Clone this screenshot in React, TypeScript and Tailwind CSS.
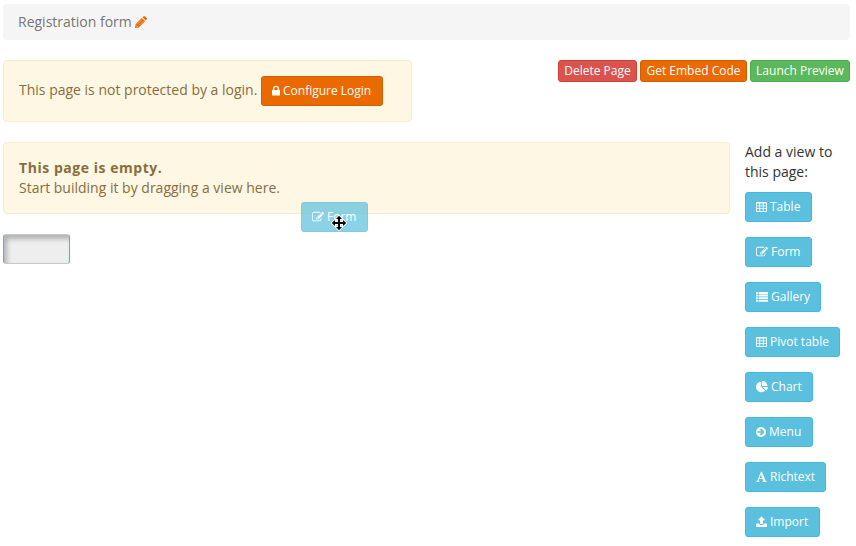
import type { ReactNode } from "react";

const font = "font-['Open_Sans','Noto_Sans',sans-serif]";

type GlyphProps = { w: number; vb?: string; children: ReactNode; className?: string };
const Glyph = ({ w, vb = "0 0 1792 1792", children, className = "" }: GlyphProps) => (
  <svg viewBox={vb} width={w} height={12} fill="currentColor" className={"shrink-0 " + className}>
    {children}
  </svg>
);

const Lock = () => (
  <Glyph w={8} vb="320 128 1152 1536">
    <path d="M640 768h512v-192q0-106-75-181t-181-75-181 75-75 181v192zm832 96v576q0 40-28 68t-68 28h-960q-40 0-68-28t-28-68v-576q0-40 28-68t68-28h32v-192q0-184 132-316t316-132 316 132 132 316v192h32q40 0 68 28t28 68z" />
  </Glyph>
);
const Table = () => (
  <Glyph w={11} vb="0 0 11 12">
    <path fillRule="evenodd" d="M1 1h9q1 0 1 1v8q0 1-1 1h-9q-1 0-1-1v-8q0-1 1-1zM.9 2.500v1.900h2.400v-1.900zM4.200 2.500v1.900h2.600v-1.900zM7.700 2.500v1.900h2.400v-1.900zM.9 5.300v1.900h2.400v-1.900zM4.200 5.300v1.900h2.600v-1.900zM7.700 5.300v1.900h2.400v-1.900zM.9 8.100v2h2.400v-2zM4.200 8.100v2h2.600v-2zM7.700 8.100v2h2.400v-2z" />
  </Glyph>
);
const Edit = () => (
  <Glyph w={12}>
    <path d="M888 1184l116-116-152-152-116 116v56h96v96h56zm440-720q-16-16-33 1l-350 350q-17 17-1 33t33-1l350-350q17-17 1-33zm80 594v190q0 119-84.5 203.5t-203.5 84.5h-832q-119 0-203.5-84.5t-84.5-203.5v-832q0-119 84.5-203.5t203.5-84.5h832q63 0 117 25 15 7 18 23 3 17-9 29l-49 49q-14 14-32 8-23-6-45-6h-832q-66 0-113 47t-47 113v832q0 66 47 113t113 47h832q66 0 113-47t47-113v-126q0-13 9-22l64-64q15-15 35-7t20 29zm-96-738l288 288-672 672h-288v-288zm444 132l-92 92-288-288 92-92q28-28 68-28t68 28l152 152q28 28 28 68t-28 68z" />
  </Glyph>
);
const List = () => (
  <Glyph w={12} vb="0 0 12 12">
    <path d="M0 1h1.800v1.900H0zM2.600 1H12v1.900H2.600zM0 3.600h1.800v1.900H0zM2.600 3.600H12v1.900H2.600zM0 6.200h1.800v1.900H0zM2.600 6.200H12v1.900H2.600zM0 8.800h1.800v1.900H0zM2.600 8.800H12v1.900H2.600z" />
  </Glyph>
);
const Pie = () => (
  <Glyph w={12} vb="0 60 1750 1680">
    <path d="M768 890l546 546q-106 108-247.5 168t-298.5 60q-209 0-385.5-103t-279.5-279.5-103-385.5 103-385.5 279.5-279.5 385.5-103v762zm187 6h773q0 157-60 298.5t-168 247.5zm709-128h-768v-768q209 0 385.5 103t279.5 279.5 103 385.5z" />
  </Glyph>
);
const Arrow = () => (
  <Glyph w={10} vb="128 0 1536 1792">
    <path d="M1413 896q0-27-18-45l-91-91-362-362q-18-18-45-18t-45 18l-91 91q-18 18-18 45t18 45l189 189h-502q-26 0-45 19t-19 45v128q0 26 19 45t45 19h502l-189 189q-18 18-18 45t18 45l91 91q18 18 45 18t45-18l362-362 91-91q18-18 18-45zm251 0q0 209-103 385.5t-279.5 279.5-385.5 103-385.5-103-279.5-279.5-103-385.5 103-385.5 279.5-279.5 385.5-103 385.5 103 279.5 279.5 103 385.5z" />
  </Glyph>
);
const Serif = () => (
  <Glyph w={11} vb="0 0 11 12">
    <path fillRule="evenodd" d="M5 .8h1l3.500 8.700q.3.800 1.400.9v.7H6.300v-.7q1.200 0 .9-.8L6.700 8H3.200l-.5 1.400q-.3.900.9 1v.7H.1v-.7q1-.1 1.400-1.100zM3.500 7.200h2.800L4.900 3.600z" />
  </Glyph>
);
const Upload = () => (
  <Glyph w={11} vb="0 0 11 12">
    <path d="M5.500.3L9.300 4.300H7V8H4V4.300H1.700zM.6 7.600h2.700v.4q0 .9.900.9h2.600q.9 0 .9-.9v-.4h2.700q.6 0 .6.6v2.300q0 .6-.6.6H.6q-.6 0-.6-.6V8.200q0-.6.6-.6z" />
  </Glyph>
);
const Pencil = () => (
  <svg viewBox="0 0 12 12" width="12" height="12" className="text-[#eb6a00]">
    <path fill="currentColor" d="M0 12L.6 8.200 6.800 2 10 5.200 3.800 11.400zM7.500 1.300L8.400.4q.8-.8 1.600 0l1.600 1.600q.8.8 0 1.600l-.9.9z" />
    <path d="M2.700 7.900L6.900 3.700M4.200 9.400L8.400 5.200" stroke="#fff" strokeWidth=".35" />
    <path d="M1 9.400L2.600 11" stroke="#fff" strokeWidth=".6" />
  </svg>
);

const views: { label: string; icon: ReactNode; width: string }[] = [
  { label: "Table", icon: <Table />, width: "w-[67px]" },
  { label: "Form", icon: <Edit />, width: "w-[67px]" },
  { label: "Gallery", icon: <List />, width: "w-[76px]" },
  { label: "Pivot table", icon: <Table />, width: "w-[95px]" },
  { label: "Chart", icon: <Pie />, width: "w-[68px]" },
  { label: "Menu", icon: <Arrow />, width: "w-[68px]" },
  { label: "Richtext", icon: <Serif />, width: "w-[81px]" },
  { label: "Import", icon: <Upload />, width: "w-[75px]" },
];

const ViewButton = ({ label, icon, width }: (typeof views)[number]) => (
  <button className={"flex h-[30px] items-center gap-[3px] whitespace-nowrap rounded-[3px] border border-[#46b8da] bg-[#5bc0de] pl-2.5 text-xs font-medium text-white " + width}>
    {icon}
    <span className="-mt-px">{label}</span>
  </button>
);

const small = "flex h-[22px] items-center justify-center whitespace-nowrap rounded-[3px] border pb-px text-xs font-medium text-white ";

export default function App() {
  return (
    <div className={"relative h-[546px] w-[856px] overflow-hidden bg-white pl-[3px] pr-1.5 pt-1 text-sm leading-5 text-[#333] " + font}>
      <header className="flex h-9 items-center gap-[3px] rounded bg-[#f5f5f5] pl-[15px] text-[#777]">
        <span>Registration form</span>
        <Pencil />
      </header>

      <div className="mt-5 flex items-start justify-between">
        <section className="flex h-[62px] w-[409px] items-center rounded border border-[#faebcc] bg-[#fdf7e3] pl-[15px] text-[#8a6d3b]">
          <span className="-mt-0.5 w-[242px] whitespace-nowrap">This page is not protected by a login.</span>
          <button className="flex h-[30px] w-[122px] items-center gap-[3px] whitespace-nowrap rounded-[3px] border border-[#d15e00] bg-[#eb6a00] pl-2.5 text-xs font-medium text-white">
            <Lock />
            <span className="-mt-px">Configure Login</span>
          </button>
        </section>
        <div className="flex gap-[3px]">
          <button className={small + "w-[79px] border-[#d43f3a] bg-[#d9534f]"}>Delete Page</button>
          <button className={small + "w-[107px] border-[#d15e00] bg-[#eb6a00]"}>Get Embed Code</button>
          <button className={small + "w-[100px] border-[#4cae4c] bg-[#5cb85c]"}>Launch Preview</button>
        </div>
      </div>

      <div className="mt-5 flex items-start">
        <main className="w-[727px]">
          <section className="h-[72px] rounded border border-[#faebcc] bg-[#fdf7e3] pl-[15px] pt-[15px] text-[#8a6d3b]">
            <p className="font-bold tracking-[0.54px]">This page is empty.</p>
            <p>Start building it by dragging a view here.</p>
          </section>
          <div className="mt-5 h-[30px] w-[67px] rounded-[3px] border border-x-[#46b8da] border-y-[#c8c8c8] bg-[#eee] shadow-[inset_3px_4px_5px_rgba(0,0,0,0.25)]" />
        </main>
        <aside className="ml-[15px] w-[100px]">
          <p className="whitespace-nowrap">Add a view to<br />this page:</p>
          <div className="mt-2.5 flex flex-col items-start gap-[15px]">
            {views.map((v) => <ViewButton key={v.label} {...v} />)}
          </div>
        </aside>
      </div>

      <div className="absolute left-[301px] top-[202px] opacity-70">
        <ViewButton {...views[1]} />
      </div>
      <svg className="absolute left-[331px] top-[215px]" width="16" height="16" viewBox="0 0 16 16">
        <path d="M8 .8l3 3.200H9v3h3V5l3.200 3L12 11V9H9v3h2l-3 3.200L5 12h2V9H4v2L.8 8 4 5v2h3V4H5z" fill="#000" stroke="#fff" strokeWidth="1.800" paintOrder="stroke" />
      </svg>
    </div>
  );
}
